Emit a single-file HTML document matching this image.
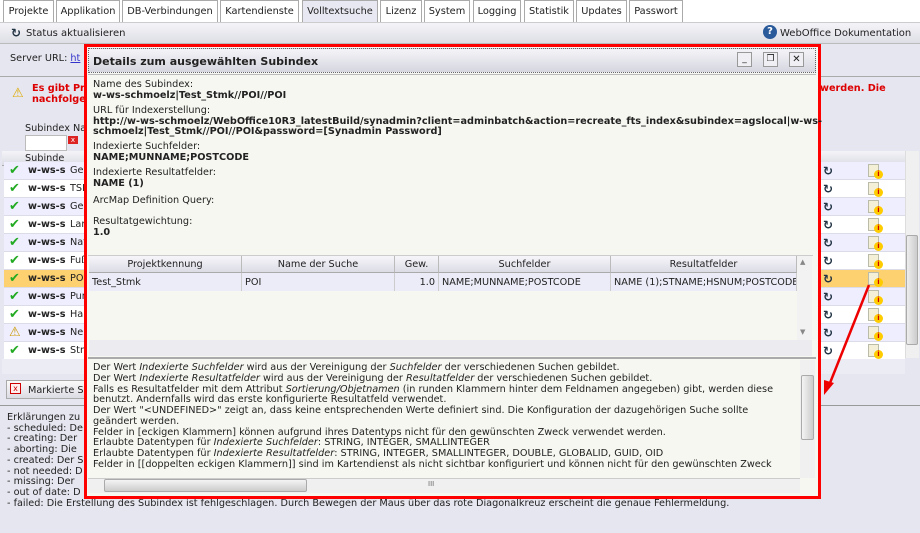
<!DOCTYPE html>
<html><head><meta charset="utf-8"><style>
*{margin:0;padding:0;box-sizing:border-box}
body{width:920px;height:533px;overflow:hidden;background:#e6e6f0;font-family:"DejaVu Sans","Liberation Sans",sans-serif;font-size:9.7px;color:#222;position:relative}
.a{position:absolute;white-space:nowrap}
.tab{position:absolute;top:0;height:22px;border:1px solid #aaa;border-bottom:none;background:#fff;padding:5px 0 0;font-size:9.8px;color:#222;white-space:nowrap;text-align:center;overflow:hidden}
b{font-weight:bold}
.row{position:absolute;left:2px;width:903px;height:18px;border-bottom:1px solid #dcdce8}
.chk{position:absolute;left:5px;top:3px;color:#2a2;font-size:13px;font-weight:bold;line-height:12px}
.ref{position:absolute;left:821px;top:2px;font-size:12px;font-weight:bold;color:#234}
.inf{position:absolute;left:864px;top:2px;width:11px;height:13px;background:#f4f0d8;border:1px solid #bba}
.inf i{position:absolute;left:5px;top:5px;width:9px;height:9px;border-radius:50%;background:#fc0;color:#c00;font-size:7px;font-style:normal;font-weight:bold;text-align:center;line-height:9px}
.gh{position:absolute;top:256px;height:17px;background:linear-gradient(#f6f6fa,#dcdce6);border-right:1px solid #bbb;border-bottom:1px solid #aaa;text-align:center;padding-top:3px;white-space:nowrap}
.gc{position:absolute;top:273px;height:18px;background:#ececf8;border-right:1px solid #ccc;padding:4px 3px 0;overflow:hidden;white-space:nowrap}
.tl{position:absolute;left:93px;white-space:nowrap}
</style></head><body>
<div style="position:absolute;left:0;top:0;width:920px;height:23px;background:#fff;border-bottom:1px solid #ccc"></div>
<div class="tab" style="left:3px;width:51px">Projekte</div>
<div class="tab" style="left:56px;width:64px">Applikation</div>
<div class="tab" style="left:122px;width:96px">DB-Verbindungen</div>
<div class="tab" style="left:220px;width:79px">Kartendienste</div>
<div class="tab" style="left:302px;width:76px;background:#e8e8f2">Volltextsuche</div>
<div class="tab" style="left:380px;width:42px">Lizenz</div>
<div class="tab" style="left:424px;width:46px">System</div>
<div class="tab" style="left:473px;width:48px">Logging</div>
<div class="tab" style="left:524px;width:50px">Statistik</div>
<div class="tab" style="left:576px;width:51px">Updates</div>
<div class="tab" style="left:629px;width:54px">Passwort</div>
<div style="position:absolute;left:0;top:23px;width:920px;height:21px;background:linear-gradient(#f4f4f8,#dedee6);border-bottom:1px solid #bbb"></div>
<div class="a" style="left:11px;top:26px;font-size:12px;font-weight:bold;color:#234">↻</div>
<div class="a" style="left:26px;top:28px;font-size:10px">Status aktualisieren</div>
<div class="a" style="left:763px;top:25px;width:14px;height:14px;border-radius:50%;background:#2a5a9a;color:#fff;font-size:10px;font-weight:bold;text-align:center;line-height:14px">?</div>
<div class="a" style="left:780px;top:28px;font-size:10px">WebOffice Dokumentation</div>
<div class="a" style="left:10px;top:53px">Server URL: <span style="color:#33c;text-decoration:underline">ht</span></div>
<div style="position:absolute;left:0;top:76px;width:920px;height:1px;background:#aaa"></div>
<div class="a" style="left:12px;top:86px;color:#da0;font-size:13px">⚠</div>
<div class="a" style="left:32px;top:83px;color:#d00;font-weight:bold;line-height:11px">Es gibt Pro<br>nachfolger</div>
<div class="a" style="left:820px;top:83px;color:#d00;font-weight:bold">werden. Die</div>
<div class="a" style="left:25px;top:123px">Subindex Na</div>
<div style="position:absolute;left:25px;top:135px;width:42px;height:16px;background:#fff;border:1px solid #bbb"></div>
<div class="a" style="left:68px;top:136px;width:10px;height:8px;background:#d22;color:#fff;font-size:7px;line-height:8px;text-align:center">x</div>
<div style="position:absolute;left:2px;top:151px;width:903px;height:15px;background:linear-gradient(#f4f4f8,#dcdce6);border-bottom:1px solid #aaa"></div>
<div class="a" style="left:25px;top:153px">Subinde</div>
<div style="position:absolute;left:2px;top:151px;width:903px;height:208px;overflow:hidden">
<div class="row" style="top:11px;background:#eef"><span class="chk">✔</span><b class="a" style="left:24px;top:3px">w-ws-s</b><span class="a" style="left:66px;top:3px">Gew</span><span class="ref" style="left:819px">↻</span><span class="inf"><i>i</i></span></div>
<div class="row" style="top:29px;background:#fff"><span class="chk">✔</span><b class="a" style="left:24px;top:3px">w-ws-s</b><span class="a" style="left:66px;top:3px">TSP</span><span class="ref" style="left:819px">↻</span><span class="inf"><i>i</i></span></div>
<div class="row" style="top:47px;background:#eef"><span class="chk">✔</span><b class="a" style="left:24px;top:3px">w-ws-s</b><span class="a" style="left:66px;top:3px">Geb</span><span class="ref" style="left:819px">↻</span><span class="inf"><i>i</i></span></div>
<div class="row" style="top:65px;background:#fff"><span class="chk">✔</span><b class="a" style="left:24px;top:3px">w-ws-s</b><span class="a" style="left:66px;top:3px">Lan</span><span class="ref" style="left:819px">↻</span><span class="inf"><i>i</i></span></div>
<div class="row" style="top:83px;background:#eef"><span class="chk">✔</span><b class="a" style="left:24px;top:3px">w-ws-s</b><span class="a" style="left:66px;top:3px">Nat</span><span class="ref" style="left:819px">↻</span><span class="inf"><i>i</i></span></div>
<div class="row" style="top:101px;background:#fff"><span class="chk">✔</span><b class="a" style="left:24px;top:3px">w-ws-s</b><span class="a" style="left:66px;top:3px">Fuß</span><span class="ref" style="left:819px">↻</span><span class="inf"><i>i</i></span></div>
<div class="row" style="top:119px;background:#fdd070"><span class="chk">✔</span><b class="a" style="left:24px;top:3px">w-ws-s</b><span class="a" style="left:66px;top:3px">POI</span><span class="ref" style="left:819px">↻</span><span class="inf"><i>i</i></span></div>
<div class="row" style="top:137px;background:#eef"><span class="chk">✔</span><b class="a" style="left:24px;top:3px">w-ws-s</b><span class="a" style="left:66px;top:3px">Pun</span><span class="ref" style="left:819px">↻</span><span class="inf"><i>i</i></span></div>
<div class="row" style="top:155px;background:#fff"><span class="chk">✔</span><b class="a" style="left:24px;top:3px">w-ws-s</b><span class="a" style="left:66px;top:3px">Hau</span><span class="ref" style="left:819px">↻</span><span class="inf"><i>i</i></span></div>
<div class="row" style="top:173px;background:#eef"><span class="chk" style="color:#c90">⚠</span><b class="a" style="left:24px;top:3px">w-ws-s</b><span class="a" style="left:66px;top:3px">Neb</span><span class="ref" style="left:819px">↻</span><span class="inf"><i>i</i></span></div>
<div class="row" style="top:191px;background:#fff"><span class="chk">✔</span><b class="a" style="left:24px;top:3px">w-ws-s</b><span class="a" style="left:66px;top:3px">Stra</span><span class="ref" style="left:819px">↻</span><span class="inf"><i>i</i></span></div>
</div>
<div style="position:absolute;left:905px;top:151px;width:14px;height:207px;background:#f0f0f0;border-left:1px solid #ddd"></div>
<div style="position:absolute;left:906px;top:235px;width:12px;height:110px;background:linear-gradient(90deg,#eee,#ccc);border:1px solid #aaa;border-radius:2px"></div>
<div style="position:absolute;left:2px;top:359px;width:903px;height:15px;background:#ececf4"></div>
<div style="position:absolute;left:6px;top:380px;width:90px;height:19px;background:linear-gradient(#fafafa,#dcdce4);border:1px solid #aaa"></div>
<div class="a" style="left:10px;top:383px;width:11px;height:11px;border:1px solid #c00;background:#fee;color:#c00;font-size:8px;line-height:9px;text-align:center">x</div>
<div class="a" style="left:28px;top:385px">Markierte S</div>
<div style="position:absolute;left:0;top:405px;width:920px;height:1px;background:#999"></div>
<div class="a" style="left:7px;top:413px;line-height:10.7px">Erklärungen zu<br>- scheduled: De<br>- creating: Der<br>- aborting: Die<br>- created: Der S<br>- not needed: D<br>- missing: Der<br>- out of date: D<br>- failed: Die Erstellung des Subindex ist fehlgeschlagen. Durch Bewegen der Maus über das rote Diagonalkreuz erscheint die genaue Fehlermeldung.</div>
<div style="position:absolute;left:84px;top:44px;width:737px;height:455px;border:3px solid #f00;background:#f7f7f2"></div>
<div style="position:absolute;left:88px;top:48px;width:728px;height:25px;background:linear-gradient(#f4f4f8,#d6d6e0);border:1px dotted #666"></div>
<div class="a" style="left:93px;top:55px;font-size:11px;font-weight:bold">Details zum ausgewählten Subindex</div>
<div class="a" style="left:737px;top:52px;width:15px;height:15px;border:1px solid #999;background:#f0f0f4;font-size:9px;text-align:center;line-height:12px">_</div>
<div class="a" style="left:763px;top:52px;width:15px;height:15px;border:1px solid #999;background:#f0f0f4;font-size:9px;text-align:center;line-height:13px">❐</div>
<div class="a" style="left:789px;top:52px;width:15px;height:15px;border:1px solid #999;background:#f0f0f4;font-size:10px;text-align:center;line-height:13px">✕</div>
<div style="position:absolute;left:88px;top:74px;width:728px;height:1px;background:#bbb"></div>
<div class="tl" style="top:80px;line-height:10.7px">Name des Subindex:<br><b>w-ws-schmoelz|Test_Stmk//POI//POI</b></div>
<div class="tl" style="top:106px;line-height:10.7px">URL für Indexerstellung:<br><b>http://w-ws-schmoelz/WebOffice10R3_latestBuild/synadmin?client=adminbatch&amp;action=recreate_fts_index&amp;subindex=agslocal|w-ws-</b><br><b>schmoelz|Test_Stmk//POI//POI&amp;password=[Synadmin Password]</b></div>
<div class="tl" style="top:142px;line-height:10.7px">Indexierte Suchfelder:<br><b>NAME;MUNNAME;POSTCODE</b></div>
<div class="tl" style="top:168px;line-height:10.7px">Indexierte Resultatfelder:<br><b>NAME (1)</b></div>
<div class="tl" style="top:195px">ArcMap Definition Query:</div>
<div class="tl" style="top:217px;line-height:10.7px">Resultatgewichtung:<br><b>1.0</b></div>
<div style="position:absolute;left:88px;top:255px;width:725px;height:101px;border-top:1px solid #ccc"></div>
<div class="gh" style="left:89px;width:153px">Projektkennung</div>
<div class="gh" style="left:242px;width:153px">Name der Suche</div>
<div class="gh" style="left:395px;width:44px">Gew.</div>
<div class="gh" style="left:439px;width:172px">Suchfelder</div>
<div class="gh" style="left:611px;width:186px">Resultatfelder</div>
<div class="gc" style="left:89px;width:153px">Test_Stmk</div>
<div class="gc" style="left:242px;width:153px">POI</div>
<div class="gc" style="left:395px;width:44px;text-align:right">1.0</div>
<div class="gc" style="left:439px;width:172px">NAME;MUNNAME;POSTCODE</div>
<div class="gc" style="left:611px;width:186px">NAME (1);STNAME;HSNUM;POSTCODE</div>
<div style="position:absolute;left:797px;top:256px;width:15px;height:84px;background:#f2f2f2"></div>
<div class="a" style="left:800px;top:258px;font-size:7px;color:#888">▲</div>
<div class="a" style="left:800px;top:328px;font-size:7px;color:#888">▼</div>
<div style="position:absolute;left:89px;top:340px;width:723px;height:16px;background:#ececf0"></div>
<div style="position:absolute;left:88px;top:357px;width:728px;height:2px;background:#aaa"></div>
<div class="tl" style="top:363px;line-height:10.75px">Der Wert <i>Indexierte Suchfelder</i> wird aus der Vereinigung der <i>Suchfelder</i> der verschiedenen Suchen gebildet.<br>Der Wert <i>Indexierte Resultatfelder</i> wird aus der Vereinigung der <i>Resultatfelder</i> der verschiedenen Suchen gebildet.<br>Falls es Resultatfelder mit dem Attribut <i>Sortierung/Objetnamen</i> (in runden Klammern hinter dem Feldnamen angegeben) gibt, werden diese<br>benutzt. Andernfalls wird das erste konfigurierte Resultatfeld verwendet.<br>Der Wert "&lt;UNDEFINED&gt;" zeigt an, dass keine entsprechenden Werte definiert sind. Die Konfiguration der dazugehörigen Suche sollte<br>geändert werden.<br>Felder in [eckigen Klammern] können aufgrund ihres Datentyps nicht für den gewünschten Zweck verwendet werden.<br>Erlaubte Datentypen für <i>Indexierte Suchfelder</i>: STRING, INTEGER, SMALLINTEGER<br>Erlaubte Datentypen für <i>Indexierte Resultatfelder</i>: STRING, INTEGER, SMALLINTEGER, DOUBLE, GLOBALID, GUID, OID<br>Felder in [[doppelten eckigen Klammern]] sind im Kartendienst als nicht sichtbar konfiguriert und können nicht für den gewünschten Zweck</div>
<div style="position:absolute;left:88px;top:474px;width:728px;height:22px;background:#f7f7f2"></div>
<div style="position:absolute;left:800px;top:360px;width:15px;height:118px;background:#f0f0f0"></div>
<div style="position:absolute;left:801px;top:375px;width:13px;height:65px;background:linear-gradient(90deg,#f4f4f4,#ccc);border:1px solid #aaa;border-radius:2px"></div>
<div style="position:absolute;left:88px;top:478px;width:712px;height:15px;background:#f0f0f0;border-top:1px solid #ccc"></div>
<div style="position:absolute;left:104px;top:479px;width:203px;height:13px;background:linear-gradient(#f4f4f4,#ccc);border:1px solid #aaa;border-radius:2px"></div>
<div class="a" style="left:428px;top:480px;font-size:7px;color:#666">III</div>
<svg class="a" style="left:820px;top:270px" width="60" height="130"><line x1="49" y1="15" x2="8" y2="118" stroke="#e00" stroke-width="2.5"/><polygon points="4,125 4,110 14,113" fill="#e00"/></svg>
</body></html>
